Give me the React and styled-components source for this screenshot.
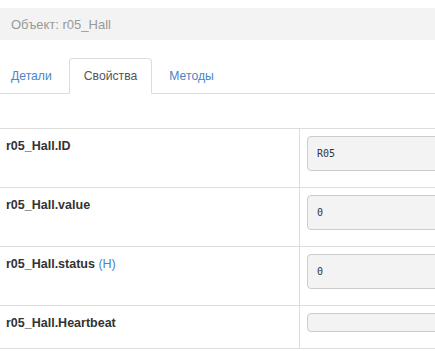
import React from "react";
import styled, { createGlobalStyle } from "styled-components";

const Global = createGlobalStyle`
  html, body { margin: 0; padding: 0; background: #fff; overflow: hidden; }
  body { font-family: "Liberation Sans", Arial, sans-serif; color: #333; }
  #root { padding-top: 8px; }
`;

const Header = styled.div`
  height: 32px;
  background: #f3f3f3;
  display: flex;
  align-items: center;
  padding-left: 11px;
  font-size: 13px;
  color: #999;
`;

const Nav = styled.ul`
  list-style: none;
  margin: 18px 0 0 0;
  padding: 0;
  display: flex;
  border-bottom: 1px solid #ddd;
`;

const Tab = styled.li`
  margin-left: ${(p) => (p.$first ? "-4px" : "0")};
  margin-right: 2px;
  margin-bottom: -1px;
  padding: 8px 14px;
  line-height: 18px;
  font-size: 12.2px;
  border: 1px solid ${(p) => (p.$active ? "#ddd" : "transparent")};
  border-bottom-color: ${(p) => (p.$active ? "#fff" : "transparent")};
  border-radius: 4px 4px 0 0;
  background: ${(p) => (p.$active ? "#fff" : "transparent")};
  color: ${(p) => (p.$active ? "#555" : "#4a86c8")};
  white-space: nowrap;
`;

const Table = styled.div`
  margin-top: 34px;
  width: 640px;
  border-top: 1px solid #ddd;
`;

const Row = styled.div`
  display: grid;
  grid-template-columns: 300px 1fr;
  border-bottom: 1px solid #ddd;
`;

const Label = styled.div`
  border-right: 1px solid #ddd;
  padding: 7px 6px 8px;
  font-size: 12.5px;
  line-height: 20px;
  font-weight: bold;
  color: #333;
`;

const Hint = styled.span`
  font-weight: normal;
  color: #4a86c8;
`;

const ValueCell = styled.div`
  padding: 7px 8px 8px 7px;
`;

const Field = styled.div`
  box-sizing: border-box;
  height: ${(p) => (p.$empty ? "19px" : "35px")};
  margin-bottom: 8px;
  border: 1px solid #ccc;
  border-radius: 4px;
  background: #f3f3f3;
  display: flex;
  align-items: center;
  padding-left: 9px;
  font-family: "DejaVu Sans Mono", "Liberation Mono", monospace;
  font-size: 10px;
  color: #333;
`;

const rows = [
  { name: "r05_Hall.ID", value: "R05" },
  { name: "r05_Hall.value", value: "0" },
  { name: "r05_Hall.status", hint: "(H)", value: "0" },
  { name: "r05_Hall.Heartbeat", value: "", empty: true },
];

export default function App() {
  return (
    <>
      <Global />
      <Header>Объект: r05_Hall</Header>
      <Nav>
        <Tab $first>Детали</Tab>
        <Tab $active>Свойства</Tab>
        <Tab>Методы</Tab>
      </Nav>
      <Table>
        {rows.map((r) => (
          <Row key={r.name}>
            <Label>
              {r.name}
              {r.hint && <> <Hint>{r.hint}</Hint></>}
            </Label>
            <ValueCell>
              <Field $empty={r.empty}>{r.value}</Field>
            </ValueCell>
          </Row>
        ))}
      </Table>
    </>
  );
}
